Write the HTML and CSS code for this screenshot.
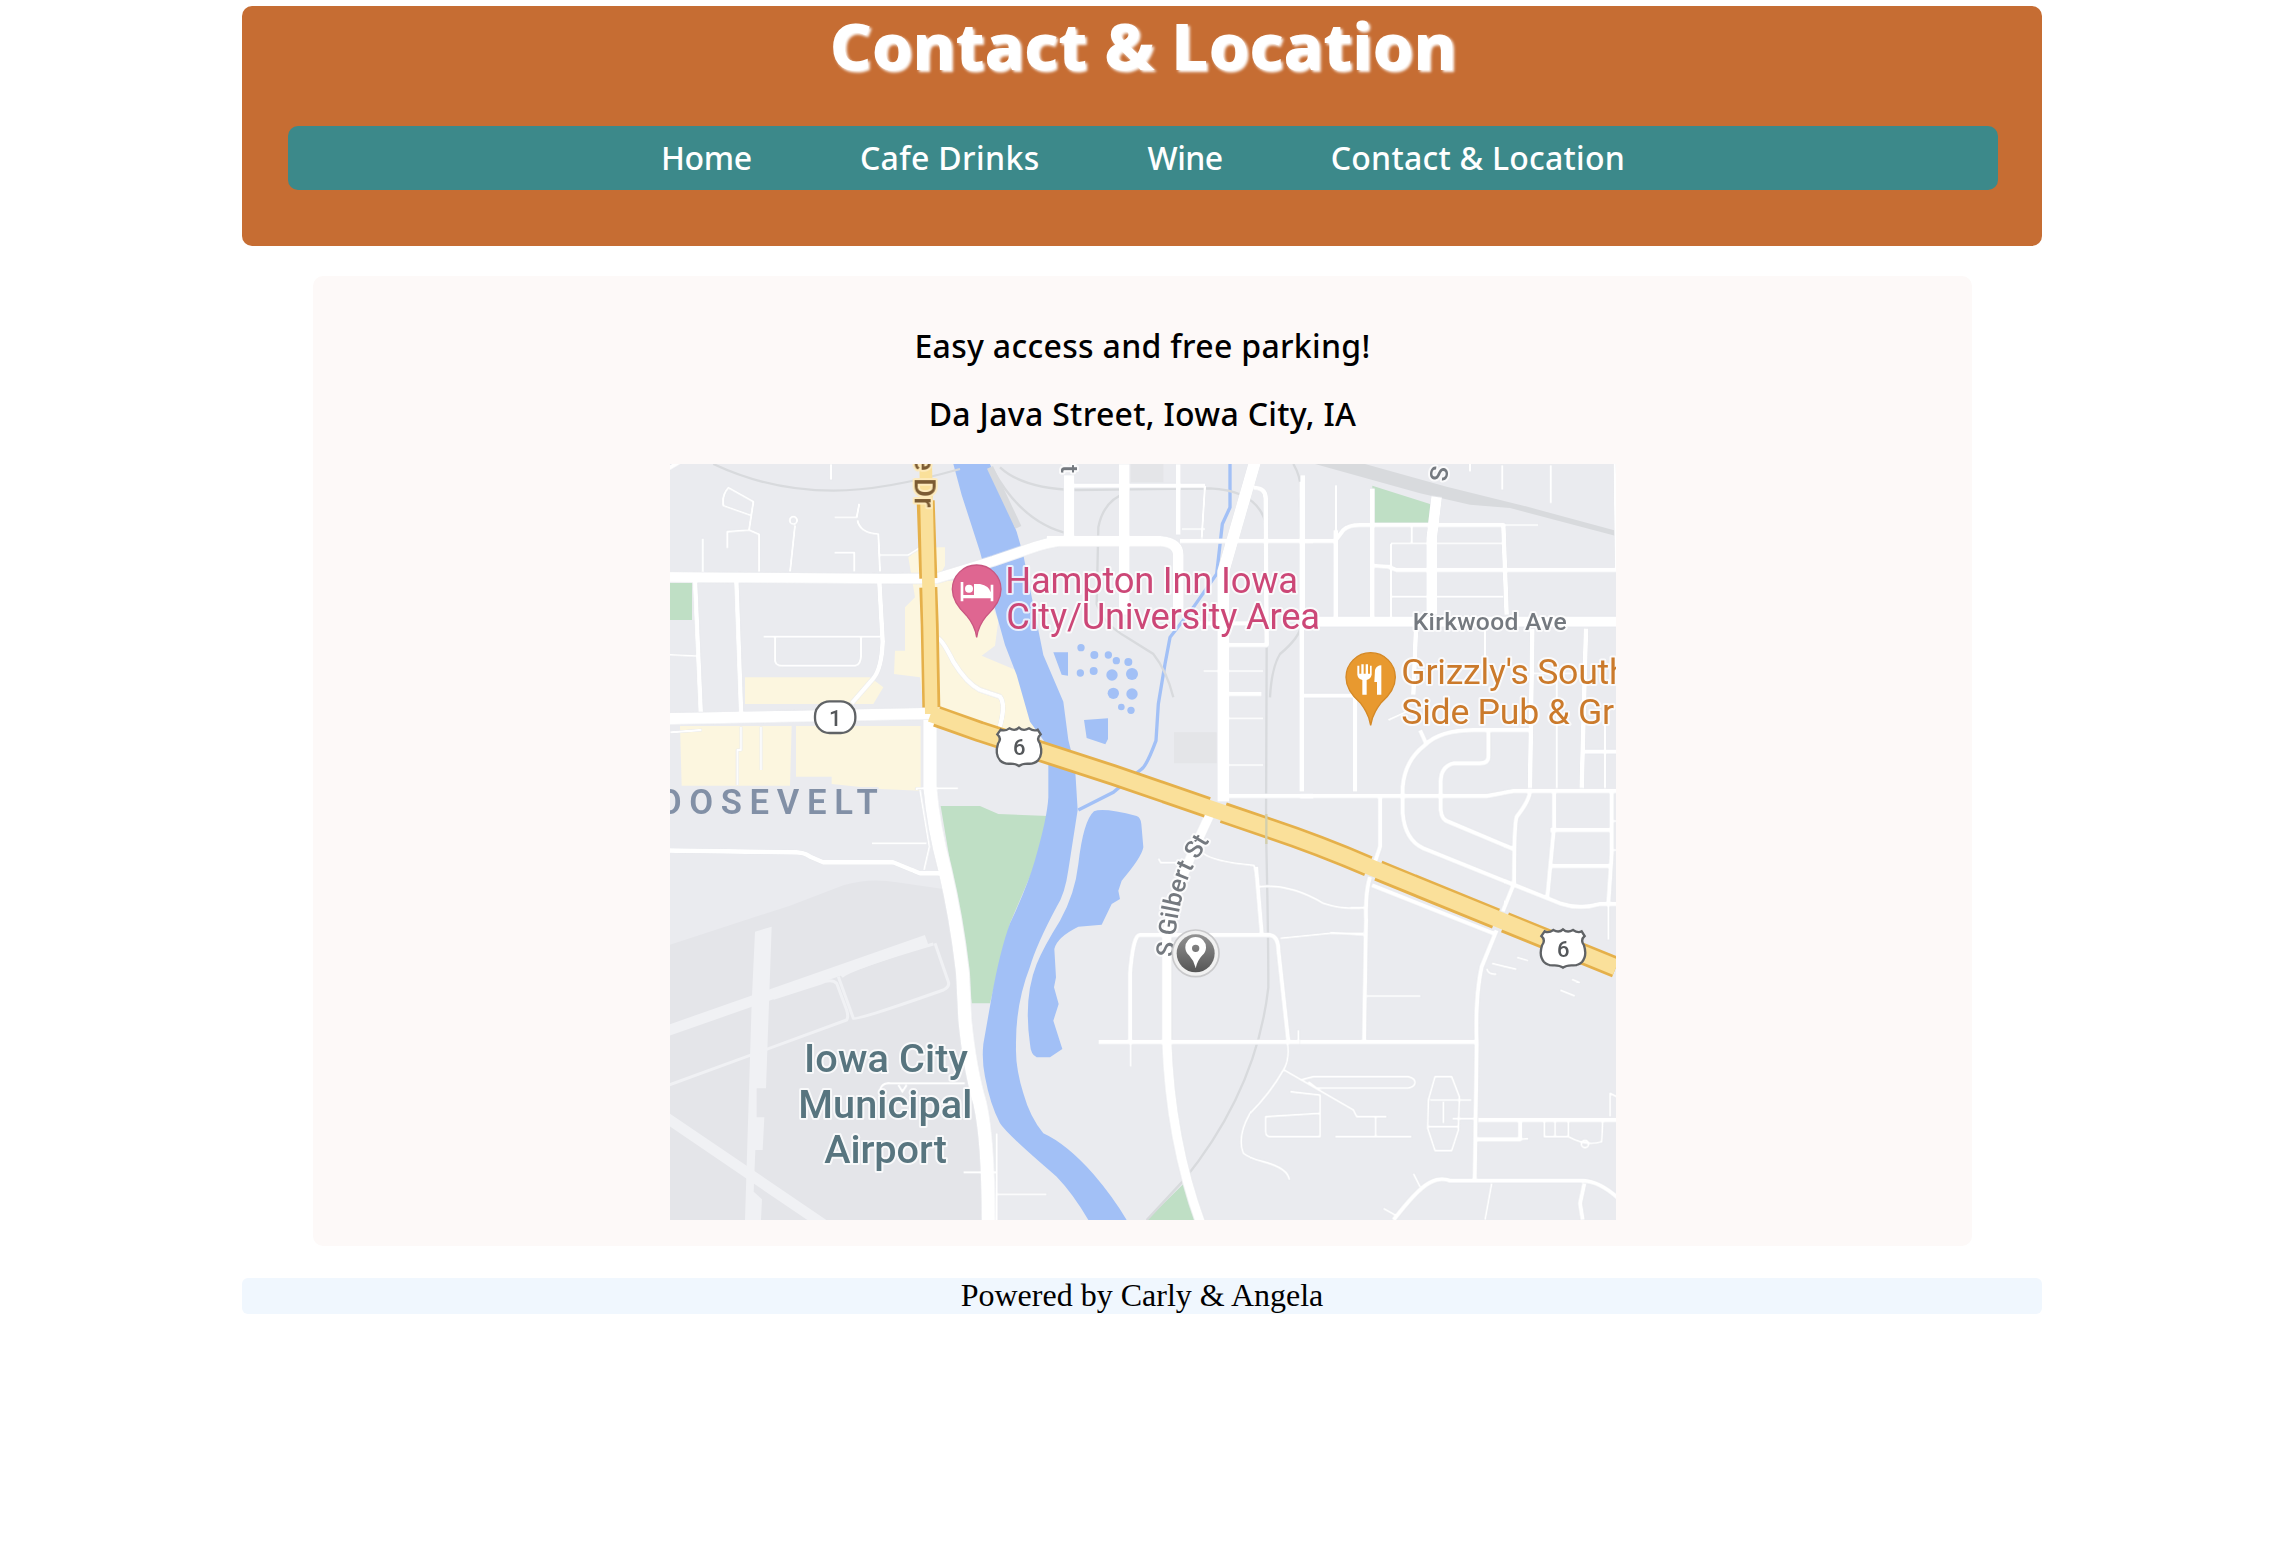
FILE: index.html
```html
<!DOCTYPE html>
<html lang="en">
<head>
<meta charset="utf-8">
<title>Contact &amp; Location</title>
<link rel="stylesheet" href="styles.css">
</head>
<body>
<div class="page">
<header class="banner">
  <h1 class="title">Contact &amp; Location</h1>
  <nav class="nav">
    <a class="link home">Home</a>
    <a class="link drinks">Cafe Drinks</a>
    <a class="link wine">Wine</a>
    <a class="link contact">Contact &amp; Location</a>
  </nav>
</header>
<main class="content">
  <p class="line">Easy access and free parking!</p>
  <p class="line">Da Java Street, Iowa City, IA</p>
  <svg class="map" viewBox="0 0 2838 2268" preserveAspectRatio="none">
    <defs>
      <linearGradient id="metal" x1="0" y1="0" x2="0" y2="1"><stop offset="0" stop-color="#929292"/><stop offset="1" stop-color="#555"/></linearGradient>
      <path id="gilbert" d="M1510 1480C1518 1380 1530 1310 1553 1248S1593 1178 1630 1108"/>
      <g id="us6">
        <path class="shield" d="M12 8Q24 14 38 4Q55 14 67 2Q80 14 97 4Q112 14 123 8L132 22Q118 34 130 50Q140 82 124 100Q112 112 92 110Q76 110 67 117Q58 110 42 110Q22 112 10 100Q-6 82 4 50Q16 34 2 22Z"/>
        <text class="num" x="68" y="85">6</text>
      </g>
    </defs>
    <rect class="land" width="2838" height="2268"/>

    <!-- airport grounds -->
    <path class="airfield" d="M0 1442L360 1325L520 1264Q600 1240 680 1255L820 1275L870 1540L920 1800L960 2268H0Z"/>
    <g class="runway" transform="translate(-30 768)">
      <path d="M285 635L335 620L318 1105H290V1192H313L308 1290H286L281 1415L306 1438L303 1500H255L275 850Z"/>
      <path class="rw" d="M0 940L800 660M0 1180L500 1520"/>
      <path class="thin" d="M0 1105L560 900Q566 890 560 870L530 790Q515 775 480 790L340 835M535 770L580 895Q590 902 850 810Q870 800 865 785L825 670M545 770Q570 745 820 672"/>
    </g>

    <!-- parks and commercial blocks -->
    <path class="park" d="M0 356H66V468H0ZM812 1026H930L985 1050L1135 1056L1130 1120L1020 1378L960 1618H905L880 1430ZM1430 2268L1540 2160L1580 2268ZM2107 65L2280 120V180H2107Z"/>
    <path class="shop" d="M225 640H600L640 670L610 720H225ZM30 786H365L360 965H35ZM378 786H752V980L630 975L485 960V938H378ZM715 280L750 250H825V305L800 350H935L985 470L975 545L935 575L1090 640L1105 800H1020L760 720L750 640L672 630L675 560H705V430L735 400Z"/>
    <path class="block" d="M1512 805H1640V898H1512ZM1382 0H1480V55H1382Z"/>

    <!-- water -->
    <g class="water">
      <path d="M850 0L875 93L930 263L980 453L1005 543L1040 633L1080 773L1120 828Q1138 870 1135 898V1000Q1132 1060 1095 1188Q1075 1260 1020 1378Q990 1460 965 1598L940 1740Q935 1790 945 1838Q960 1920 990 1978Q1010 2010 1160 2138Q1210 2190 1255 2268H1370Q1330 2200 1270 2130Q1190 2040 1120 2008Q1080 1960 1060 1888Q1036 1810 1038 1748Q1036 1620 1080 1508Q1100 1440 1160 1328Q1185 1290 1195 1218L1223 1038L1215 908L1195 828L1180 713L1120 573L1090 423L1060 273L1040 203L960 0Z"/>
      <path d="M1272 1042Q1300 1030 1400 1056Q1412 1060 1414 1080L1420 1150Q1415 1180 1355 1250L1345 1280L1350 1305L1325 1320L1295 1382L1225 1388Q1160 1420 1153 1455L1158 1540L1152 1570L1166 1620L1150 1670L1177 1755L1140 1780H1100Q1082 1772 1080 1740Q1060 1600 1100 1500Q1120 1450 1170 1370Q1215 1290 1225 1200Q1240 1070 1272 1042Z"/>
      <path d="M1150 565H1194V635L1175 632ZM1242 768L1314 763V825L1306 841L1250 822Z"/>
      <circle cx="1233" cy="551" r="11"/><circle cx="1273" cy="573" r="12"/><circle cx="1315" cy="573" r="11"/><circle cx="1339" cy="590" r="11"/><circle cx="1375" cy="594" r="12"/><circle cx="1231" cy="627" r="11"/><circle cx="1271" cy="621" r="12"/><circle cx="1326" cy="633" r="17"/><circle cx="1386" cy="630" r="18"/><circle cx="1330" cy="688" r="17"/><circle cx="1386" cy="690" r="17"/><circle cx="1354" cy="729" r="10"/><circle cx="1383" cy="739" r="11"/>
      <path class="creek" d="M1680 0V130L1657 180L1640 330L1570 430L1500 520L1485 600L1465 720L1458 830Q1430 905 1415 915L1390 935L1330 985L1225 1038"/>
    </g>

    <!-- railways -->
    <g class="rail">
      <path d="M130 0Q300 80 490 80Q640 80 870 15M990 10Q1060 75 1220 78L1620 73Q1770 80 1790 190V560L1788 1100Q1795 1400 1795 1570Q1760 1880 1540 2150L1430 2268M1370 85Q1300 110 1285 190L1280 420Q1300 480 1370 520L1450 570Q1490 620 1510 700M1870 0Q1900 50 1890 110L1895 480Q1890 520 1830 570Q1805 610 1800 700M970 20Q1060 180 1200 210"/>
      <path class="taper" d="M1935 0H2085L2330 68L2560 125L2838 200V216L2520 132L2400 122L2250 88Z"/>
      <path class="mid" d="M960 10L1045 190"/>
    </g>

    <g class="roads">
      <g transform="translate(-30 -27)">
        <path class="r34" d="M0 366L700 371L830 370L1000 318L1130 274Q1160 265 1200 258H1500"/>
        <path class="r44" d="M0 792L600 780L830 775"/>
        <path class="r14" d="M105 380L122 770M229 380L243 770M658 380L668 560Q665 640 640 670L575 745M0 55L60 20"/>
        <path class="r8" d="M267 225L280 140L205 98Q185 120 190 152L275 182M202 280V230L267 225L297 238V350M128 250V350M390 350L405 210M523 187H590L598 145M592 195Q600 235 655 237L660 350M523 293H583V350M660 300H745L785 275M310 545H660M345 545V615Q345 632 365 632H585Q603 630 603 600V545M0 598L110 603M513 27V75"/>
        <circle class="r8" cx="400" cy="196" r="11"/>
        <path class="r18" d="M835 550Q850 560 880 620Q920 685 960 705L1020 725Q1040 750 1015 830"/>
      </g>
      <g transform="translate(930 -27)">
        <path class="r34" d="M267 60V260M433 27V480M200 258H540Q595 262 595 300V470"/>
        <path class="r44 cut" d="M825 20L730 350V1040"/>
        <path class="r14" d="M280 92H675M595 27V240M600 258H1000M820 98Q857 98 857 130L860 570H740M965 80V1010M740 717H845"/>
        <path class="r8" d="M675 92L665 250M605 222H675M670 648H850M745 790H850M740 930H850"/>
        <path class="r18" d="M740 1023H1000M640 505H810"/>
      </g>
      <g transform="translate(1890 -27)">
        <path class="r34" d="M0 500H960M410 125L395 250V480"/>
        <path class="r14" d="M0 258H105L130 225Q145 210 180 210H610L620 480M217 100V490M215 332L265 335L290 345H960M107 225V490M8 60V490M348 520L340 720M697 520L690 1000M858 520L845 1000M0 722H165V1010"/>
        <path class="r8" d="M944 20L948 350M610 210H715M273 265H610M273 265V490M270 425H610M335 215V265M607 30V105M752 30V145M108 90V240M555 520V640M510 25V50M700 655H860M265 795L320 770M770 640V1000M915 800V1000"/>
      </g>
      <g transform="translate(-30 768)">
        <path class="r50" d="M810 0V200Q820 320 855 450Q890 600 908 760L915 900Q930 1050 960 1150Q985 1260 985 1500"/>
        <path class="r14" d="M0 391L410 397Q435 398 450 410L490 427H700L780 460H845"/>
        <path class="r8" d="M30 37L125 30M243 20V90H232V195M303 20V150M770 210V205H895M780 210L808 380L792 450M635 370H800M660 1110Q665 1088 690 1090H915M910 1357H1010M1010 1240V1500M715 1095L727 1115L740 1095"/>
      </g>
      <g transform="translate(930 768)">
        <path class="r30" d="M705 250L640 390L580 540L560 650V960Q570 1260 662 1510"/>
        <path class="r18" d="M450 970V760Q460 640 480 645H870Q895 650 895 690L925 965M828 440L845 640M355 966H960"/>
        <path class="r8" d="M535 415L542 428H590M670 400Q700 425 822 436L835 500Q930 490 1030 550Q1090 570 1150 563M900 655L1050 640H1150M452 960V1040M922 965Q930 1020 910 1050Q870 1120 810 1180Q770 1250 790 1300Q810 1315 850 1325Q925 1345 928 1380M912 1050L1120 1170L1130 1190H1220M960 1080L1000 1070H1285Q1305 1075 1305 1087T1285 1104H1010L985 1085M930 1115L1020 1125V1250H870Q857 1250 857 1235V1190L1020 1180M50 1423H200M1065 1250H1295M1187 1190V1250M955 930V960"/>
      </g>
      <g transform="translate(1890 768)">
        <path class="r14" d="M0 228H560L640 213H960M695 30H520Q420 30 375 75Q315 120 308 200V280Q315 360 370 385L780 550Q840 570 900 552H960M565 30V110Q565 130 540 130H460Q420 140 422 190V270Q425 300 445 305L640 387M240 225V380L225 425M210 470Q195 520 198 600L192 965M690 210Q690 240 650 290Q642 310 642 490L608 575M590 630L545 740Q525 830 530 970L524 1380M762 215V320L742 530M935 220V400L925 550M750 330H940M750 438H930M0 966H530M215 495L580 640M535 1200H960M530 1258H660V1205M280 1500Q350 1410 385 1390T450 1382H850Q900 1385 955 1435M853 1390L840 1450L848 1500M850 95H960M360 30L378 70"/>
        <path class="r8" d="M200 828H362M200 563H150M193 645L90 638M925 550V660M940 303H960M940 390H960M405 1070H455L478 1130L475 1230L455 1292H405L383 1225L385 1140ZM390 1140H515M385 1220H475M430 1145V1210M457 1196H530M340 1360L360 1400M250 1465L285 1485M575 1390L555 1500M733 1205V1250H805V1205M805 1250Q860 1280 905 1265L908 1205M765 1205V1250M930 1190V1120L960 1135M660 1258L685 1256M575 730L650 748M560 745Q565 765 590 762M650 712L685 722M780 810L825 828M815 778L840 788"/>
        <circle class="r8" cx="855" cy="1272" r="11"/>
      </g>
    </g>

    <!-- US 6 -->
    <g class="highway">
      <path class="edge v" d="M767 110L775 343M775 370L779 480L784 730"/>
      <path class="edge d" d="M800 757L930 803L1330 933L1612 1030M1660 1046L1800 1094Q1950 1144 2095 1207M2125 1220L2478 1364M2505 1375L2838 1510"/>
      <path class="fill v2" d="M767 0L775 343L779 493L784 750"/>
      <path class="fill d2" d="M782 750L930 803L1330 933L1635 1038L1800 1094Q1950 1144 2110 1213L2490 1368L2838 1510"/>
    </g>
    <path class="railover" d="M1789 1050V1140"/>

    <!-- shields -->
    <rect class="shield" x="435" y="712" width="121" height="95" rx="44"/>
    <text class="num" x="496" y="787">1</text>
    <use href="#us6" x="980" y="789"/>
    <use href="#us6" x="2612" y="1394"/>

    <!-- hotel and restaurant pins -->
    <path class="hotel" d="M920 520Q915 485 890 455Q847 415 847 376A73 73 0 0 1 993 376Q993 415 950 455Q925 485 920 520Z"/>
    <g class="glyph"><path d="M872 354H880V393H912V360H930Q958 366 962 385V362H970V412H962V403H880V412H872Z"/><circle cx="897" cy="374" r="12"/></g>
    <path class="food" d="M2102 784Q2097 750 2072 718Q2028 680 2028 640A74 74 0 0 1 2176 640Q2176 680 2132 718Q2107 750 2102 784Z"/>
    <path class="glyph" d="M2062 605H2068V629H2074V601H2081V629H2087V601H2094V629H2100V605H2105V632Q2102 645 2090 648V692H2077V648Q2064 645 2062 632ZM2115 618Q2120 604 2134 604V692H2121V654H2113Z"/>

    <g class="labels">
      <text class="pink" x="1006" y="387" textLength="878">Hampton Inn Iowa</text>
      <text class="pink" x="1009" y="495" textLength="941">City/University Area</text>
      <text class="orange" x="2194" y="661" textLength="682">Grizzly's South</text>
      <text class="orange" x="2194" y="780" textLength="638">Side Pub &amp; Gr</text>
      <text class="street-name" x="2228" y="498" textLength="462">Kirkwood Ave</text>
      <text class="area" x="-37" y="1051">OOSEVELT</text>
      <text class="airport" x="402" y="1823" textLength="492">Iowa City</text>
      <text class="airport" x="385" y="1961" textLength="522">Municipal</text>
      <text class="airport" x="463" y="2098" textLength="368">Airport</text>
      <text class="street-name gil"><textPath href="#gilbert" textLength="372">S Gilbert St</textPath></text>
      <text class="drive" transform="translate(734 -27) rotate(90)">e Dr</text>
      <text class="street-name" transform="translate(1173 -42) rotate(90)">St</text>
      <text class="street-name" transform="translate(2284 3) rotate(97)">S</text>
    </g>

    <!-- cafe marker -->
    <circle class="halo" cx="1577" cy="1468" r="70"/>
    <circle cx="1577" cy="1468" r="57" fill="url(#metal)"/>
    <path class="dot" d="M1577 1513Q1572 1490 1557 1474A31 31 0 1 1 1597 1474Q1582 1490 1577 1513ZM1577 1442A11 11 0 1 0 1577 1464A11 11 0 1 0 1577 1442Z"/>
  </svg>
</main>
<footer class="footer">Powered by Carly &amp; Angela</footer>
</div>
</body>
</html>
```
FILE: styles.css
```css
body { margin: 0; background: #fff; color: #000; }
.page { width: 1800px; margin-left: 242px; padding-top: 6px; }
.banner { box-sizing: border-box; height: 240px; padding: 0 44px 0 46px; border-radius: 10px; background: #c66d33; }
.title { margin: 0; height: 120px; text-align: center; font: 800 65px/78px "Noto Sans", sans-serif; letter-spacing: 0; color: #fff; text-shadow: 2px 2px 3px #fff; white-space: nowrap; }
.nav { display: flex; justify-content: center; align-items: center; gap: 108px; height: 64px; border-radius: 10px; background: #3c898a; }
.link { font: 500 32px/64px "Noto Sans", sans-serif; color: #fff; white-space: nowrap; }
.home { letter-spacing: -.3px; }
.drinks { letter-spacing: .35px; }
.wine { letter-spacing: -.5px; }
.contact { letter-spacing: .25px; }
.content { box-sizing: border-box; display: flex; flex-direction: column; align-items: center; width: 1659px; height: 970px; margin: 30px 0 0 71px; padding-top: 36px; border-radius: 10px; background: #fdf9f8; }
.line { margin: 0; height: 68px; font: 500 32px/68px "Noto Sans", sans-serif; letter-spacing: .31px; white-space: nowrap; }
.map { display: block; width: 946px; height: 756px; margin: 16px 0 0 1px; flex: none; overflow: hidden; }
.footer { height: 36px; margin-top: 32px; border-radius: 6px; background: #f0f7fe; text-align: center; font: 32px/34px "Liberation Serif", serif; }

.land { fill: #eaebef; }
.airfield { fill: #e4e5e9; }
.runway { fill: #f0f1f4; }
.runway .rw { fill: none; stroke: #f0f1f4; stroke-width: 32; }
.runway .thin { fill: none; stroke: #f0f1f4; stroke-width: 9; }
.park { fill: #bfdfc5; }
.shop { fill: #fcf6df; }
.block { fill: #e4e5e8; }
.water { fill: #a2c0f6; }
.creek { fill: none; stroke: #a2c0f6; stroke-width: 10; }
.rail { fill: none; stroke: #d8dadd; stroke-width: 7; }
.rail .taper { fill: #d8dadd; stroke: none; }
.rail .mid { stroke-width: 20; }
.railover { stroke: #d3cfad; stroke-width: 7; }
.roads { fill: none; stroke: #fff; stroke-linejoin: round; filter: drop-shadow(0 0 1px #cdd0d8); }
.r8 { stroke-width: 7; }
.r14 { stroke-width: 14; }
.r18 { stroke-width: 14; }
.r30 { stroke-width: 30; }
.r34 { stroke-width: 32; }
.r44 { stroke-width: 36; }
.r50 { stroke-width: 42; }
.highway { fill: none; stroke-linejoin: round; }
.edge { stroke: #e5b04a; }
.fill { stroke: #fae09a; }
.v { stroke-width: 54; }
.v2 { stroke-width: 38; }
.d { stroke-width: 64; }
.d2 { stroke-width: 48; }
.shield { fill: #fff; stroke: #606366; stroke-width: 7; }
.num { font: 500 66px Roboto, sans-serif; fill: #54575a; text-anchor: middle; }
.hotel { fill: #df6691; stroke: #c95680; stroke-width: 4; }
.food { fill: #e8992f; stroke: #d48825; stroke-width: 4; }
.glyph { fill: #fff; }
.halo { fill: #f1f1f1; stroke: #c9c9cb; stroke-width: 5; }
.dot { fill: #fff; fill-rule: evenodd; }
.labels { font-family: Roboto, sans-serif; paint-order: stroke; stroke: rgba(255, 255, 255, .75); stroke-width: 12; stroke-linejoin: round; }
.pink { font-size: 109px; fill: #cc4777; }
.orange { font-size: 107px; fill: #cb7a2b; }
.street-name { font-size: 74px; font-weight: 500; fill: #74797f; }
.area { font-size: 104px; font-weight: 600; letter-spacing: 23px; fill: #8290a6; stroke: #eaebef; }
.airport { font-size: 119px; font-weight: 500; fill: #58757f; }
.drive { font-size: 88px; font-weight: 500; fill: #7b5b33; stroke: #fdeabb; }
```
